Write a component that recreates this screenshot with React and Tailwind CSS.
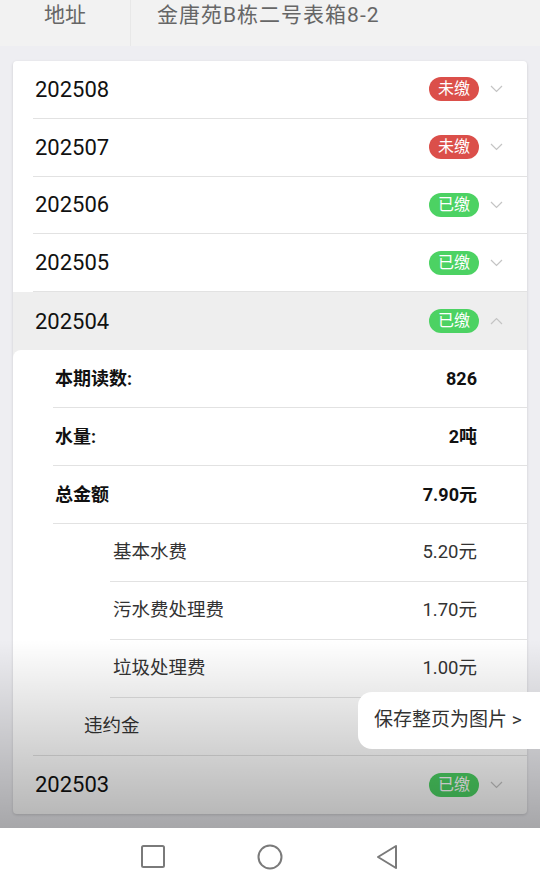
import React from 'react';

const FONT = { fontFamily: '"Roboto", "Noto Sans CJK SC", sans-serif' };

const bills = [
  { month: '202508', paid: false },
  { month: '202507', paid: false },
  { month: '202506', paid: true },
  { month: '202505', paid: true },
  { month: '202504', paid: true, open: true },
  { month: '202503', paid: true },
];

function Chevron({ up }) {
  return (
    <svg width="13" height="8" viewBox="0 0 13 8" className="ml-[11px]">
      <polyline
        points={up ? '1,7 6.5,1.5 12,7' : '1,1 6.5,6.5 12,1'}
        fill="none"
        stroke="#c4c4c4"
        strokeWidth="1.2"
      />
    </svg>
  );
}

function Badge({ paid }) {
  return (
    <span
      className={
        'w-[50px] h-[24px] rounded-full text-[16px] leading-none text-white flex items-center justify-center ' +
        (paid ? 'bg-[#4cd263]' : 'bg-[#db4f4a]')
      }
    >
      {paid ? '已缴' : '未缴'}
    </span>
  );
}

function BillRow({ bill, last }) {
  return (
    <div className={bill.open ? 'bg-[#eeeeee]' : ''}>
      <div
        className={
          'ml-[20px] h-[57.8px] pl-[2px] pr-[24px] flex items-center ' +
          (last || bill.open ? '' : 'border-b border-[#e2e2e2]')
        }
      >
        <span className="flex-1 text-[22px] text-[#111]">{bill.month}</span>
        <Badge paid={bill.paid} />
        <Chevron up={bill.open} />
      </div>
    </div>
  );
}

function Detail() {
  const main = [
    ['本期读数:', '826'],
    ['水量:', '2吨'],
    ['总金额', '7.90元'],
  ];
  const sub = [
    ['基本水费', '5.20元'],
    ['污水费处理费', '1.70元'],
    ['垃圾处理费', '1.00元'],
  ];
  return (
    <div className="bg-[#eeeeee]">
      <div className="bg-white rounded-tl-[8px]">
        {main.map(([k, v]) => (
          <div key={k} className="ml-[40px] h-[58px] pl-[2px] pr-[50px] flex items-center border-b border-[#e2e2e2] text-[18px] font-bold text-[#111]">
            <span className="flex-1">{k}</span>
            <span>{v}</span>
          </div>
        ))}
        {sub.map(([k, v]) => (
          <div key={k} className="ml-[97px] h-[58px] pl-[3px] pr-[50px] flex items-center border-b border-[#e2e2e2] text-[18.5px] text-[#333]">
            <span className="flex-1">{k}</span>
            <span>{v}</span>
          </div>
        ))}
        <div className="h-[57px] pl-[71px] flex items-center text-[18.5px] text-[#333]">
          <span>违约金</span>
        </div>
        <div className="ml-[20px] h-px bg-[#e2e2e2]" />
      </div>
    </div>
  );
}

export default function App() {
  return (
    <div className="relative w-full h-[886px] overflow-hidden bg-[#eeeef2] flex flex-col" style={FONT}>
      <div className="h-[46px] bg-[#f2f2f2] flex text-[21px] text-[#666] leading-[30px] shrink-0">
        <div className="w-[131px] border-r border-[#e8e8e8] flex justify-center">地址</div>
        <div className="pl-[26px] tracking-[1px]">金唐苑B栋二号表箱8-2</div>
      </div>

      <div className="flex-1 px-[13px] pt-[15px] overflow-hidden">
        <div className="bg-white rounded-[4px] shadow-[0_1px_3px_rgba(0,0,0,0.15)] overflow-hidden">
          {bills.map((b, i) => (
            <React.Fragment key={b.month}>
              <BillRow bill={b} last={i === bills.length - 1} />
              {b.open && <Detail />}
            </React.Fragment>
          ))}
        </div>
      </div>

      <div className="pointer-events-none absolute left-0 right-0 top-[640px] h-[188px] bg-linear-to-b from-black/0 to-black/30" />

      <div className="absolute right-0 top-[692px] h-[57px] w-[182px] bg-white rounded-l-[14px] flex items-center pl-[16px] text-[19px] text-[#333]">
        保存整页为图片 &gt;
      </div>

      <div className="h-[58px] bg-white shrink-0 flex items-center justify-center gap-[92px]">
        <svg width="24" height="24" viewBox="0 0 24 24">
          <rect x="1" y="1" width="22" height="21" rx="1.5" fill="none" stroke="#7a7a7a" strokeWidth="2" />
        </svg>
        <svg width="26" height="26" viewBox="0 0 26 26">
          <circle cx="13" cy="13" r="11.5" fill="none" stroke="#7a7a7a" strokeWidth="2" />
        </svg>
        <svg width="24" height="26" viewBox="0 0 24 26">
          <path d="M21 2 L3 13 L21 24 Z" fill="none" stroke="#7a7a7a" strokeWidth="2" strokeLinejoin="round" />
        </svg>
      </div>
    </div>
  );
}
